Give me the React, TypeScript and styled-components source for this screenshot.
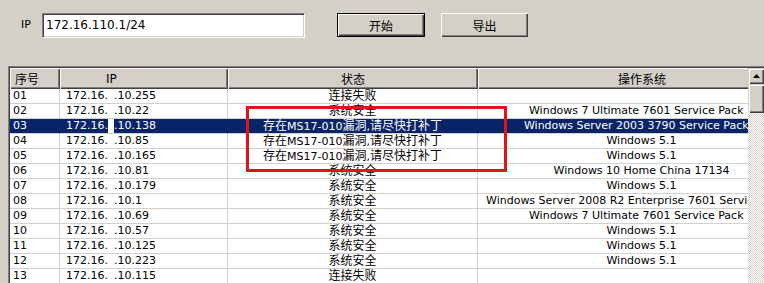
import React from "react";
import styled, { createGlobalStyle } from "styled-components";

const Global = createGlobalStyle`
  html, body { margin: 0; padding: 0; background: #d4d0c8; }
  body { font-family: "DejaVu Sans", "Noto Sans CJK SC", sans-serif; font-size: 11px; color: #000; }
`;

const Window = styled.div`
  width: 764px;
  height: 283px;
  overflow: hidden;
  background: #d4d0c8;
  position: relative;
`;

const Toolbar = styled.div`
  display: flex;
  align-items: center;
  height: 24px;
  padding: 13px 0 0 21px;
`;

const Label = styled.span`
  width: 21px;
  line-height: 24px;
`;

const Input = styled.div`
  box-sizing: border-box;
  width: 263px;
  height: 25px;
  background: #fff;
  border-top: 1px solid #808080;
  border-left: 1px solid #808080;
  border-right: 1px solid #fff;
  border-bottom: 1px solid #fff;
  box-shadow: inset 1px 1px #404040, inset -1px -1px #d4d0c8;
  padding: 0 3px;
  line-height: 22px;
  font-size: 12px;
`;

const Button = styled.div<{ $default?: boolean; $ml: number; $w: number }>`
  box-sizing: border-box;
  margin-left: ${(p) => p.$ml}px;
  width: ${(p) => p.$w}px;
  height: 24px;
  display: flex;
  align-items: center;
  justify-content: center;
  font-size: 12px;
  background: #d4d0c8;
  border: ${(p) => (p.$default ? "1px solid #000" : "none")};
  box-shadow: inset 1px 1px #fff, inset -1px -1px #404040, inset -2px -2px #808080;
`;

const List = styled.div`
  position: relative;
  box-sizing: border-box;
  margin: 29px 0 0 8px;
  width: 758px;
  height: 230px;
  display: flex;
  border-top: 1px solid #808080;
  border-left: 1px solid #808080;
  box-shadow: inset 1px 1px #404040;
  padding: 1px 0 0 1px;
`;

const Viewport = styled.div`
  position: relative;
  width: 738px;
  overflow: hidden;
  background: #fff;
`;

const Grid = styled.div`
  display: grid;
  grid-template-columns: 50px 168px 250px 328px;
  width: 796px;
`;

const HeadCell = styled.div<{ $align: "left" | "center"; $pl?: number }>`
  box-sizing: border-box;
  height: 21px;
  background: #d4d0c8;
  box-shadow: inset 1px 1px #fff, inset -1px -1px #404040, inset -2px -2px #808080;
  display: flex;
  align-items: center;
  justify-content: ${(p) => (p.$align === "center" ? "center" : "flex-start")};
  padding-left: ${(p) => p.$pl ?? 0}px;
  font-size: 12px;
  white-space: nowrap;
`;

const Cell = styled.div<{ $align: "left" | "center"; $pl?: number; $sel?: boolean }>`
  box-sizing: border-box;
  height: 15px;
  line-height: 14px;
  border-bottom: 1px solid #d4d0c8;
  border-right: 1px solid ${(p) => (p.$sel ? "#0a246a" : "#d4d0c8")};
  background: ${(p) => (p.$sel ? "#0a246a" : "#fff")};
  color: ${(p) => (p.$sel ? "#fff" : "#000")};
  text-align: ${(p) => p.$align};
  padding: ${(p) => (p.$align === "center" ? "0 8px" : `0 0 0 ${p.$pl ?? 0}px`)};
  white-space: nowrap;
  overflow: hidden;
`;

const Han = styled.span`
  font-size: 12px;
`;

const Redact = styled.span`
  display: inline-block;
  width: 6px;
  height: 14px;
  vertical-align: top;
  background: #fff;
`;

const Highlight = styled.div`
  position: absolute;
  left: 236px;
  top: 38px;
  width: 261px;
  height: 66px;
  box-sizing: border-box;
  border: 3px solid #e0131b;
  pointer-events: none;
`;

const ScrollBar = styled.div`
  width: 16px;
  display: flex;
  flex-direction: column;
  background-color: #fff;
  background-image: conic-gradient(#fff 25%, #d4d0c8 0 50%, #fff 0 75%, #d4d0c8 0);
  background-size: 2px 2px;
`;

const ScrollBtn = styled.div`
  box-sizing: border-box;
  height: 16px;
  background: #d4d0c8;
  box-shadow: inset 1px 1px #d4d0c8, inset 2px 2px #fff, inset -1px -1px #404040, inset -2px -2px #808080;
  display: flex;
  align-items: center;
  justify-content: center;
`;

const Thumb = styled.div`
  box-sizing: border-box;
  height: 29px;
  background: #d4d0c8;
  box-shadow: inset 1px 1px #d4d0c8, inset 2px 2px #fff, inset -1px -1px #404040, inset -2px -2px #808080;
`;

const hanRe = /([\u3000-\u303f\u4e00-\u9fff\uff00-\uffef]+)/;

function T({ s }: { s: string }) {
  const parts = s.split(hanRe);
  return (
    <>
      {parts.map((p, i) => (hanRe.test(p) ? <Han key={i}>{p}</Han> : <React.Fragment key={i}>{p}</React.Fragment>))}
    </>
  );
}

const VULN = "存在MS17-010漏洞,请尽快打补丁";
const SAFE = "系统安全";
const FAIL = "连接失败";

const rows: [string, string, string, string][] = [
  ["01", ".10.255", FAIL, ""],
  ["02", ".10.22", SAFE, "Windows 7 Ultimate 7601 Service Pack 1"],
  ["03", ".10.138", VULN, "Windows Server 2003 3790 Service Pack 2"],
  ["04", ".10.85", VULN, "Windows 5.1"],
  ["05", ".10.165", VULN, "Windows 5.1"],
  ["06", ".10.81", SAFE, "Windows 10 Home China 17134"],
  ["07", ".10.179", SAFE, "Windows 5.1"],
  ["08", ".10.1", SAFE, "Windows Server 2008 R2 Enterprise 7601 Service Pack 1"],
  ["09", ".10.69", SAFE, "Windows 7 Ultimate 7601 Service Pack 1"],
  ["10", ".10.57", SAFE, "Windows 5.1"],
  ["11", ".10.125", SAFE, "Windows 5.1"],
  ["12", ".10.223", SAFE, "Windows 5.1"],
  ["13", ".10.115", FAIL, ""],
];

export default function App() {
  return (
    <Window>
      <Global />
      <Toolbar>
        <Label>IP</Label>
        <Input>172.16.110.1/24</Input>
        <Button $default $ml={32} $w={88}>开始</Button>
        <Button $ml={16} $w={87}>导出</Button>
      </Toolbar>
      <List>
        <Viewport>
          <Grid>
            <HeadCell $align="left" $pl={5}><T s="序号" /></HeadCell>
            <HeadCell $align="left" $pl={46}>IP</HeadCell>
            <HeadCell $align="center"><T s="状态" /></HeadCell>
            <HeadCell $align="center"><T s="操作系统" /></HeadCell>
            {rows.map(([n, ip, st, os]) => {
              const sel = n === "03";
              return (
                <React.Fragment key={n}>
                  <Cell $align="left" $pl={3} $sel={sel}>{n}</Cell>
                  <Cell $align="left" $pl={6} $sel={sel}>
                    172.16.<Redact />{ip}
                  </Cell>
                  <Cell $align="center" $sel={sel}><T s={st} /></Cell>
                  <Cell $align="center" $sel={sel}>{os}</Cell>
                </React.Fragment>
              );
            })}
          </Grid>
          <Highlight />
        </Viewport>
        <ScrollBar>
          <ScrollBtn>
            <svg width="7" height="4" viewBox="0 0 7 4"><path d="M3.5 0L7 4H0z" fill="#000" /></svg>
          </ScrollBtn>
          <Thumb />
        </ScrollBar>
      </List>
    </Window>
  );
}
